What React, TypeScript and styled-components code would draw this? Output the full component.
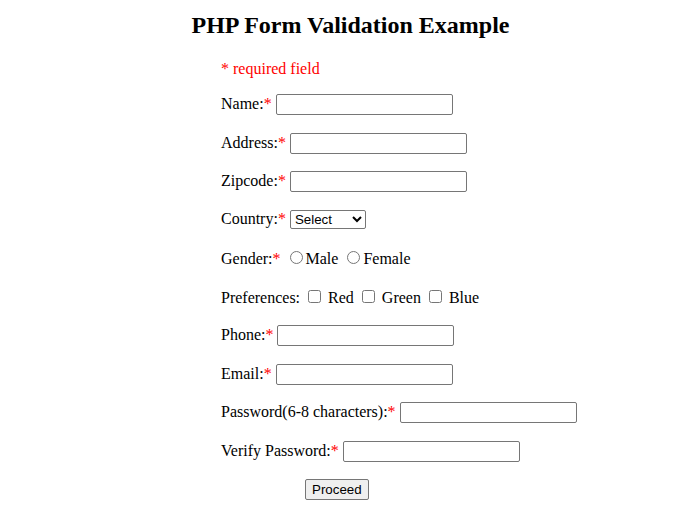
import { FC } from "react";
import styled, { createGlobalStyle } from "styled-components";

const GlobalStyle = createGlobalStyle`
  body {
    margin: 0;
    background: #ffffff;
    color: #000000;
    font-family: "Liberation Serif", "Times New Roman", serif;
    font-size: 16px;
  }
`;

const Page = styled.div`
  padding-top: 12px;
`;

const Title = styled.h2`
  margin: 0;
  padding-left: 16px;
  font-size: 24px;
  font-weight: bold;
  line-height: 27px;
  text-align: center;
`;

const Form = styled.form`
  margin-top: 21px;
  padding-left: 221px;
`;

const Required = styled.div`
  color: #ff0000;
  line-height: 18px;
  margin-bottom: 16px;
`;

const Fields = styled.div`
  display: flex;
  flex-direction: column;
  align-items: flex-start;
  gap: 17.5px;
`;

const Row = styled.div`
  display: flex;
  align-items: baseline;
  gap: 4px;
  height: 21px;
`;

const Label = styled.span`
  white-space: nowrap;
`;

const Star = styled.span`
  color: #ff0000;
`;

const TextInput = styled.input`
  box-sizing: border-box;
  width: ${(p) => p.width || 177}px;
  height: 21px;
  margin: 0;
  padding: 1px 2px;
  border: 1px solid #767676;
  border-radius: 2px;
  font-family: "Liberation Sans", Arial, sans-serif;
  font-size: 13.333px;
`;

const Select = styled.select`
  box-sizing: border-box;
  width: 76px;
  height: 19px;
  margin: 0;
  border: 1px solid #767676;
  border-radius: 2px;
  font-family: "Liberation Sans", Arial, sans-serif;
  font-size: 13.333px;
  color: #000000;
  background: #ffffff;
`;

const Choice = styled.label<{ $gap: number }>`
  display: inline-flex;
  align-items: baseline;
  gap: ${(p) => p.$gap}px;
`;

const Radio = styled.input`
  width: 13px;
  height: 13px;
  margin: 3px 3px 0 5px;
`;

const Check = styled.input`
  width: 13px;
  height: 13px;
  margin: 3px 3px 3px 4px;
`;

const ButtonRow = styled.div`
  padding-left: 84px;
  height: 21px;
`;

const Button = styled.button`
  box-sizing: border-box;
  height: 21px;
  margin: 0;
  padding: 1px 6px;
  border: 1px solid #767676;
  border-radius: 2px;
  background: #efefef;
  color: #000000;
  font-family: "Liberation Sans", Arial, sans-serif;
  font-size: 13.333px;
`;

const Field: FC<{ label: string; width?: number; type?: string }> = ({
  label,
  width,
  type = "text",
}) => (
  <Row>
    <Label>
      {label}
      <Star>*</Star>
    </Label>
    <TextInput type={type} width={width} />
  </Row>
);

const App: FC = () => {
  return (
    <Page>
      <GlobalStyle />
      <Title>PHP Form Validation Example</Title>
      <Form onSubmit={(e) => e.preventDefault()}>
        <Required>* required field</Required>
        <Fields>
          <Field label="Name:" />
          <Field label="Address:" />
          <Field label="Zipcode:" />
          <Row>
            <Label>
              Country:<Star>*</Star>
            </Label>
            <Select defaultValue="">
              <option value="">Select</option>
              <option value="in">India</option>
              <option value="us">USA</option>
              <option value="uk">UK</option>
            </Select>
          </Row>
          <Row>
            <Label>
              Gender:<Star>*</Star>
            </Label>
            <Choice $gap={0}>
              <Radio type="radio" name="gender" value="male" />
              Male
            </Choice>
            <Choice $gap={0}>
              <Radio type="radio" name="gender" value="female" />
              Female
            </Choice>
          </Row>
          <Row>
            <Label>Preferences:</Label>
            <Choice $gap={4}>
              <Check type="checkbox" />
              Red
            </Choice>
            <Choice $gap={4}>
              <Check type="checkbox" />
              Green
            </Choice>
            <Choice $gap={4}>
              <Check type="checkbox" />
              Blue
            </Choice>
          </Row>
          <Field label="Phone:" />
          <Field label="Email:" />
          <Field label="Password(6-8 characters):" type="password" />
          <Field label="Verify Password:" type="password" />
          <ButtonRow>
            <Button type="submit">Proceed</Button>
          </ButtonRow>
        </Fields>
      </Form>
    </Page>
  );
};

export default App;
